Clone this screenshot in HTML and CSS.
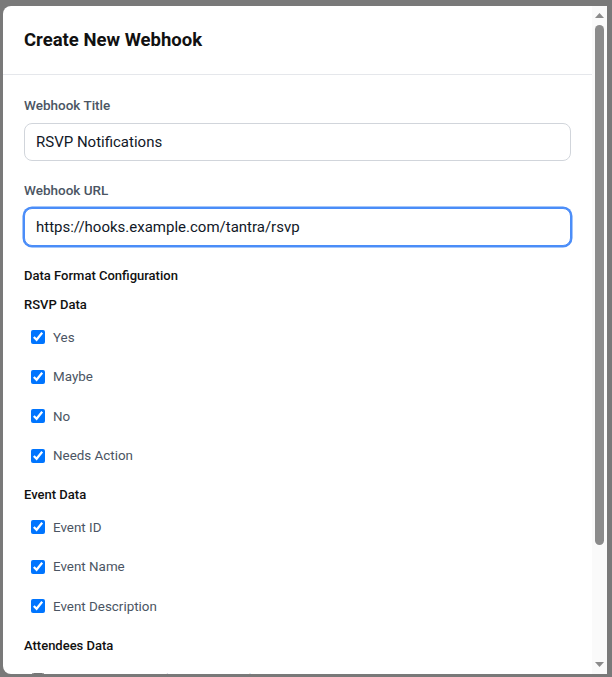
FILE: index.html
```html
<!DOCTYPE html>
<html lang="en">
<head>
<meta charset="utf-8">
<title>Create New Webhook</title>
<link rel="stylesheet" href="styles.css">
</head>
<body>
<div class="overlay">
  <div class="modal">
    <div class="modal-content">
      <div class="modal-header">
        <h2 class="modal-title">Create New Webhook</h2>
      </div>
      <div class="modal-body">
        <div class="field">
          <label class="field-label" for="title">Webhook Title</label>
          <input class="text-input" id="title" type="text" value="RSVP Notifications">
        </div>
        <div class="field">
          <label class="field-label" for="url">Webhook URL</label>
          <input class="text-input is-focused" id="url" type="text" value="https://hooks.example.com/tantra/rsvp">
        </div>
        <div class="config">
          <div class="config-title">Data Format Configuration</div>
          <div class="group">
            <div class="group-title">RSVP Data</div>
            <div class="options">
              <label class="option"><input class="check" type="checkbox" checked><span>Yes</span></label>
              <label class="option"><input class="check" type="checkbox" checked><span>Maybe</span></label>
              <label class="option"><input class="check" type="checkbox" checked><span>No</span></label>
              <label class="option"><input class="check" type="checkbox" checked><span>Needs Action</span></label>
            </div>
          </div>
          <div class="group">
            <div class="group-title">Event Data</div>
            <div class="options">
              <label class="option"><input class="check" type="checkbox" checked><span>Event ID</span></label>
              <label class="option"><input class="check" type="checkbox" checked><span>Event Name</span></label>
              <label class="option"><input class="check" type="checkbox" checked><span>Event Description</span></label>
            </div>
          </div>
          <div class="group group-attendees">
            <div class="group-title">Attendees Data</div>
            <div class="options">
              <label class="option"><input class="check" type="checkbox"><span>Include Attendees (name &amp; email)</span></label>
            </div>
          </div>
        </div>
      </div>
    </div>
    <div class="scrollbar" aria-hidden="true">
      <div class="scroll-btn">
        <svg width="9" height="5" viewBox="0 0 9 5"><polygon points="4.5,0 9,5 0,5" fill="#8b8b8b"/></svg>
      </div>
      <div class="scroll-track">
        <div class="scroll-thumb"></div>
      </div>
      <div class="scroll-btn scroll-btn-down">
        <svg width="9" height="5" viewBox="0 0 9 5"><polygon points="0,0 9,0 4.5,5" fill="#8b8b8b"/></svg>
      </div>
    </div>
  </div>
</div>
</body>
</html>
```

FILE: styles.css
```css
* {
  box-sizing: border-box;
}

html, body {
  margin: 0;
  padding: 0;
  height: 100%;
}

body {
  font-family: Roboto, "Liberation Sans", Arial, sans-serif;
  background: #797979;
  color: #111827;
}

.overlay {
  height: 100vh;
  padding: 6px 5px 3px 3px;
  display: flex;
}

.modal {
  flex: 1;
  min-width: 0;
  background: #ffffff;
  border-radius: 8px 0 0 8px;
  overflow: hidden;
  display: flex;
}

.modal-content {
  flex: 1;
  min-width: 0;
  overflow: hidden;
  display: flex;
  flex-direction: column;
}

/* scrollbar */
.scrollbar {
  width: 15px;
  flex: none;
  background: #fafafa;
  display: flex;
  flex-direction: column;
}

.scroll-btn {
  height: 15px;
  flex: none;
  display: flex;
  justify-content: center;
  align-items: flex-start;
  padding-top: 7px;
}

.scroll-btn-down {
  padding-top: 3px;
}

.scroll-btn svg {
  display: block;
}

.scroll-track {
  flex: 1;
  padding-top: 4px;
  display: flex;
  justify-content: center;
}

.scroll-thumb {
  width: 9px;
  height: 520px;
  background: #8b8b8b;
  border-radius: 5px;
}

/* header */
.modal-header {
  padding: 20px 21px;
  border-bottom: 1px solid #e5e7eb;
}

.modal-title {
  margin: 0;
  font-size: 18.5px;
  line-height: 28px;
  font-weight: 700;
  color: #111111;
}

/* body */
.modal-body {
  padding: 20px 21px 20px;
  display: flex;
  flex-direction: column;
  gap: 19.5px;
}

.field {
  display: flex;
  flex-direction: column;
  gap: 8px;
}

.field-label {
  font-size: 13.5px;
  line-height: 20px;
  font-weight: 500;
  color: #4b5563;
}

.text-input {
  height: 37.5px;
  padding: 0 11px;
  border: 1px solid #d1d5db;
  border-radius: 8px;
  font-family: inherit;
  font-size: 15px;
  color: #111827;
  background: #ffffff;
  outline: none;
}

.text-input.is-focused {
  border-color: #4b8df8;
  box-shadow: 0 0 0 1.5px #4b8df8;
}

.config {
  display: flex;
  flex-direction: column;
  gap: 9px;
  margin-top: 1px;
}

.config-title {
  font-size: 13px;
  line-height: 20px;
  font-weight: 500;
  color: #111111;
}

.group {
  display: flex;
  flex-direction: column;
  gap: 8.5px;
  margin-bottom: 6.5px;
}

.group-attendees {
  gap: 10.5px;
}

.group-title {
  font-size: 13px;
  line-height: 20px;
  font-weight: 500;
  color: #111111;
}

.options {
  display: flex;
  flex-direction: column;
  gap: 12px;
}

.option {
  display: flex;
  align-items: center;
  gap: 8px;
  padding: 4px 0 4px 7px;
  font-size: 13.4px;
  line-height: 19.5px;
  color: #4b5563;
}

.check {
  margin: 0;
  width: 14px;
  height: 14px;
}
```
